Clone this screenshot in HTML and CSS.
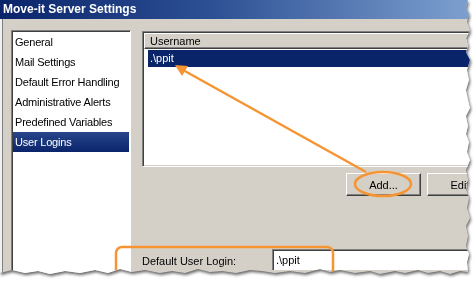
FILE: index.html
```html
<!DOCTYPE html>
<html lang="en">
<head>
	<meta charset="utf-8">
	<title>Move-it Server Settings</title>
	<link rel="stylesheet" href="styles.css">
</head>
<body>
	<section class="shadow">
		<section class="window">
			<div class="titleBar">Move-it Server Settings</div>
			<div class="main">
				<div class="leftCol">
					<ul class="navList">
						<li>General</li>
						<li>Mail Settings</li>
						<li>Default Error Handling</li>
						<li>Administrative Alerts</li>
						<li>Predefined Variables</li>
						<li class="selected">User Logins</li>
					</ul>
				</div>
				<div class="rightCol">
					<div class="listView">
						<div class="listHeader">Username</div>
						<div class="listRow selected">.\ppit</div>
					</div>
					<div class="buttonRow">
						<button class="winButton">Add...</button>
						<button class="winButton">Edit...</button>
					</div>
					<div class="loginRow">
						<span class="loginLabel">Default User Login:</span>
						<div class="loginInput">.\ppit</div>
					</div>
				</div>
			</div>
			<svg class="annotations" viewBox="0 0 470 276" width="470" height="276">
				<!-- arrow from Add... to the user row -->
				<line x1="366" y1="172" x2="183" y2="70" class="mark"/>
				<polygon points="175,65 188,66 182,76" class="markFill"/>
				<ellipse cx="383" cy="184" rx="28" ry="12" class="mark"/>
				<rect x="116" y="247" width="217" height="40" rx="6" class="mark"/>
			</svg>
		</section>
	</section>
</body>
</html>
```
FILE: styles.css
```css
html, body{ margin:0px; background-color:rgb(255,255,255); font-family:'Liberation Sans', Arial, sans-serif; font-size:11px; }

.shadow{ width:473px; height:282px; filter: drop-shadow(1px 2px 1.5px rgba(0,0,0,0.6)); }
.window{
	position: relative;
	width:470px; height:276px;
	background-color:rgb(212,208,200);
	overflow:hidden;
	clip-path: polygon(0 0, 468px 0, 466px 8px, 469px 14px, 467px 22px, 470px 30px, 466px 38px, 468px 46px, 466px 52px, 470px 60px, 467px 70px, 469px 80px, 466px 90px, 468px 100px, 470px 108px, 466px 116px, 468px 126px, 466px 134px, 469px 142px, 467px 152px, 470px 160px, 466px 170px, 468px 180px, 466px 190px, 469px 198px, 467px 208px, 470px 218px, 466px 226px, 468px 236px, 466px 246px, 469px 254px, 467px 262px, 468px 272px,
		460px 271px, 450px 274px, 440px 271px, 428px 273px, 418px 270px, 405px 273px, 395px 271px, 380px 274px, 370px 271px, 355px 273px, 340px 270px, 330px 272px, 320px 269px, 305px 273px, 290px 271px, 275px 273px, 262px 271px, 250px 270px, 236px 273px, 222px 271px, 210px 272px, 198px 269px, 185px 273px, 172px 271px, 160px 273px, 145px 270px, 132px 272px, 120px 269px, 108px 273px, 95px 270px, 80px 273px, 65px 271px, 50px 274px, 38px 271px, 25px 273px, 12px 270px, 0 273px);
	box-shadow: inset 2px 0 0 rgb(240,240,240), inset 3px 0 0 rgb(128,128,128);
}

.titleBar{
	height:19px; line-height:19px;
	padding-left:3px;
	color:rgb(255,255,255);
	font-weight:bold; font-size:12px;
	background: linear-gradient(to right, rgb(10,36,106) 0%, rgb(45,80,148) 45%, rgb(125,160,208) 100%);
}

.main{ display:flex; height:257px; }
.leftCol{ padding:11px 0 0 11px; }
.navList{
	list-style:none; margin:0; padding:1px 1px 0 1px;
	width:116px; height:260px;
	background-color:rgb(255,255,255);
	border-top:1px solid rgb(128,128,128); border-left:1px solid rgb(128,128,128);
	border-right:1px solid rgb(255,255,255);
	box-shadow: inset 1px 1px 0 rgb(64,64,64);
}
.navList li{ height:20px; line-height:20px; padding-left:2px; letter-spacing:-0.2px; white-space:nowrap; }
.navList li.selected{ color:rgb(255,255,255); background: linear-gradient(to bottom, rgb(40,70,140), rgb(10,36,106)); }

.rightCol{ display:flex; flex-direction:column; margin-left:11px; padding-top:12px; width:370px; flex-shrink:0; }
.listView{
	height:133px;
	background-color:rgb(255,255,255);
	border-top:1px solid rgb(128,128,128); border-left:1px solid rgb(128,128,128);
	border-bottom:1px solid rgb(255,255,255);
	box-shadow: inset 1px 1px 0 rgb(64,64,64), inset 0 -1px 0 rgb(212,208,200);
	padding:1px 0 0 1px;
}
.listHeader{
	height:14px; line-height:14px;
	padding-left:5px;
	background-color:rgb(212,208,200);
	border-top:1px solid rgb(255,255,255); border-left:1px solid rgb(255,255,255);
	border-bottom:1px solid rgb(64,64,64);
	box-shadow: inset 0 -1px 0 rgb(128,128,128);
}
.listRow{ height:17px; line-height:17px; margin:1px 0 0 4px; padding-left:2px; }
.listRow.selected{ color:rgb(255,255,255); background-color:rgb(10,36,106); }

.buttonRow{ display:flex; gap:6px; padding:6px 0 0 204px; }
.winButton{
	flex-shrink:0;
	width:75px; height:23px;
	font-family:inherit; font-size:11px; color:rgb(0,0,0);
	background-color:rgb(212,208,200);
	border:1px solid; border-color:rgb(255,255,255) rgb(64,64,64) rgb(64,64,64) rgb(255,255,255);
	box-shadow: inset -1px -1px 0 rgb(128,128,128);
	padding:0;
}

.loginRow{ display:flex; align-items:flex-start; margin-top:53px; }
.loginLabel{ width:130px; padding-top:6px; }
.loginInput{
	flex:1;
	height:20px; line-height:20px;
	padding-left:3px;
	background-color:rgb(255,255,255);
	border-top:1px solid rgb(128,128,128); border-left:1px solid rgb(128,128,128);
	box-shadow: inset 1px 1px 0 rgb(64,64,64);
}

.annotations{ position:absolute; left:0; top:0; pointer-events:none; }
.mark{ stroke:rgb(247,148,50); stroke-width:2.5; fill:none; }
.markFill{ fill:rgb(247,148,50); }
```
